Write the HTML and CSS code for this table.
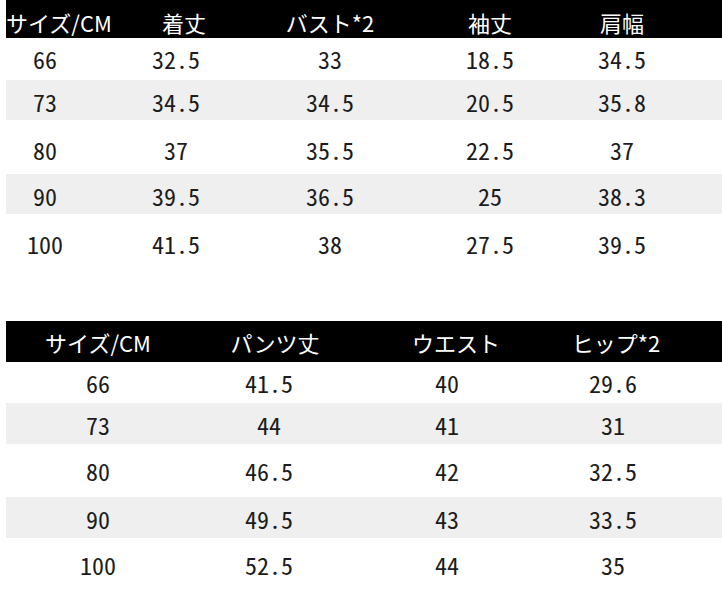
FILE: index.html
```html
<!DOCTYPE html>
<html lang="ja">
<head>
<meta charset="utf-8">
<title>サイズ表</title>
<link rel="stylesheet" href="styles.css">
</head>
<body>
<div class="sheet">
  <section class="table t1">
    <div class="row head">
      <div class="c first">サイズ/CM</div>
      <div class="c s16">着丈</div>
      <div class="c">バスト*2</div>
      <div class="c">袖丈</div>
      <div class="c">肩幅</div>
    </div>
    <div class="row h42"><div class="c">66</div><div class="c">32.5</div><div class="c">33</div><div class="c">18.5</div><div class="c">34.5</div></div>
    <div class="row alt"><div class="c">73</div><div class="c">34.5</div><div class="c">34.5</div><div class="c">20.5</div><div class="c">35.8</div></div>
    <div class="row tall"><div class="c">80</div><div class="c">37</div><div class="c">35.5</div><div class="c">22.5</div><div class="c">37</div></div>
    <div class="row alt"><div class="c">90</div><div class="c">39.5</div><div class="c">36.5</div><div class="c">25</div><div class="c">38.3</div></div>
    <div class="row tall"><div class="c">100</div><div class="c">41.5</div><div class="c">38</div><div class="c">27.5</div><div class="c">39.5</div></div>
  </section>

  <section class="table t2">
    <div class="row head">
      <div class="c">サイズ/CM</div>
      <div class="c s12">パンツ丈</div>
      <div class="c s18">ウエスト</div>
      <div class="c s6">ヒップ*2</div>
    </div>
    <div class="row h41"><div class="c">66</div><div class="c">41.5</div><div class="c">40</div><div class="c">29.6</div></div>
    <div class="row alt"><div class="c">73</div><div class="c">44</div><div class="c">41</div><div class="c">31</div></div>
    <div class="row tall2"><div class="c">80</div><div class="c">46.5</div><div class="c">42</div><div class="c">32.5</div></div>
    <div class="row alt"><div class="c">90</div><div class="c">49.5</div><div class="c">43</div><div class="c">33.5</div></div>
    <div class="row tall2"><div class="c">100</div><div class="c">52.5</div><div class="c">44</div><div class="c">35</div></div>
  </section>
</div>
</body>
</html>
```

FILE: styles.css
```css
html, body {
  margin: 0;
  padding: 0;
  background: #ffffff;
}

.sheet {
  width: 722px;
  height: 596px;
  overflow: hidden;
  padding-left: 6px;
  box-sizing: border-box;
}

.table {
  display: flex;
  flex-direction: column;
}

.t2 {
  margin-top: 53px;
}

.row {
  display: grid;
  align-items: center;
  justify-items: center;
  box-sizing: border-box;
  color: #1c1c1c;
  font-family: "Noto Sans Mono CJK JP", "Noto Sans CJK JP", "DejaVu Sans Mono", monospace;
  font-size: 24px;
  line-height: 1;
  white-space: nowrap;
}

.t1 .row {
  grid-template-columns: 78px 184px 124px 196px 68px 1fr;
}

.t2 .row {
  grid-template-columns: 184px 158px 198px 134px 1fr;
}

.row.head {
  background: #000000;
  color: #ffffff;
  font-family: "Noto Sans CJK JP", "Noto Sans", sans-serif;
  font-size: 22px;
  font-weight: 400;
}

.t1 .row.head {
  height: 38px;
  padding-top: 6px;
}

.t2 .row.head {
  height: 41px;
}

.row.head .first {
  justify-self: start;
}

.s16 { padding-left: 16px; }
.s12 { padding-left: 12px; }
.s18 { padding-left: 18px; }
.s6 { padding-left: 6px; }

.row.h42 { height: 42px; }
.row.h41 { height: 41px; }

.row.alt {
  height: 40px;
  padding-top: 4px;
  background: #efefef;
}

.t2 .row.alt {
  height: 41px;
  padding-top: 3px;
}

.row.tall {
  height: 54px;
  padding-top: 6px;
}

.row.tall2 {
  height: 53px;
}
```
